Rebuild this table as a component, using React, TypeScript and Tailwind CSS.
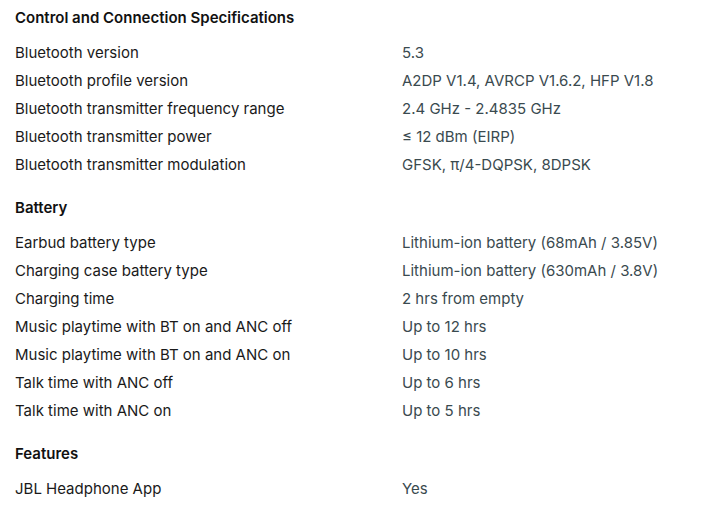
import React from "react";

const sections: { title: string; rows: [string, string][] }[] = [
  {
    title: "Control and Connection Specifications",
    rows: [
      ["Bluetooth version", "5.3"],
      ["Bluetooth profile version", "A2DP V1.4, AVRCP V1.6.2, HFP V1.8"],
      ["Bluetooth transmitter frequency range", "2.4 GHz - 2.4835 GHz"],
      ["Bluetooth transmitter power", "≤ 12 dBm (EIRP)"],
      ["Bluetooth transmitter modulation", "GFSK, π/4-DQPSK, 8DPSK"],
    ],
  },
  {
    title: "Battery",
    rows: [
      ["Earbud battery type", "Lithium-ion battery (68mAh / 3.85V)"],
      ["Charging case battery type", "Lithium-ion battery (630mAh / 3.8V)"],
      ["Charging time", "2 hrs from empty"],
      ["Music playtime with BT on and ANC off", "Up to 12 hrs"],
      ["Music playtime with BT on and ANC on", "Up to 10 hrs"],
      ["Talk time with ANC off", "Up to 6 hrs"],
      ["Talk time with ANC on", "Up to 5 hrs"],
    ],
  },
  {
    title: "Features",
    rows: [["JBL Headphone App", "Yes"]],
  },
];

export default function App() {
  return (
    <div
      className="w-[718px] h-[512px] bg-white overflow-hidden px-[15px] pt-[4px]"
      style={{ fontFamily: "Inter, 'Noto Sans', sans-serif" }}
    >
      <div className="flex flex-col gap-[15px]">
        {sections.map((s) => (
          <div key={s.title} className="flex flex-col">
            <div className="h-[27px] leading-[27px] text-[15px] font-semibold text-[#111111] mb-[8px]">
              {s.title}
            </div>
            {s.rows.map(([k, v]) => (
              <div key={k} className="flex h-[28px] items-center text-[15px]">
                <div className="w-[387px] text-[#1a1a1a]">{k}</div>
                <div className="text-[#3a4a4f]">{v}</div>
              </div>
            ))}
          </div>
        ))}
      </div>
    </div>
  );
}
